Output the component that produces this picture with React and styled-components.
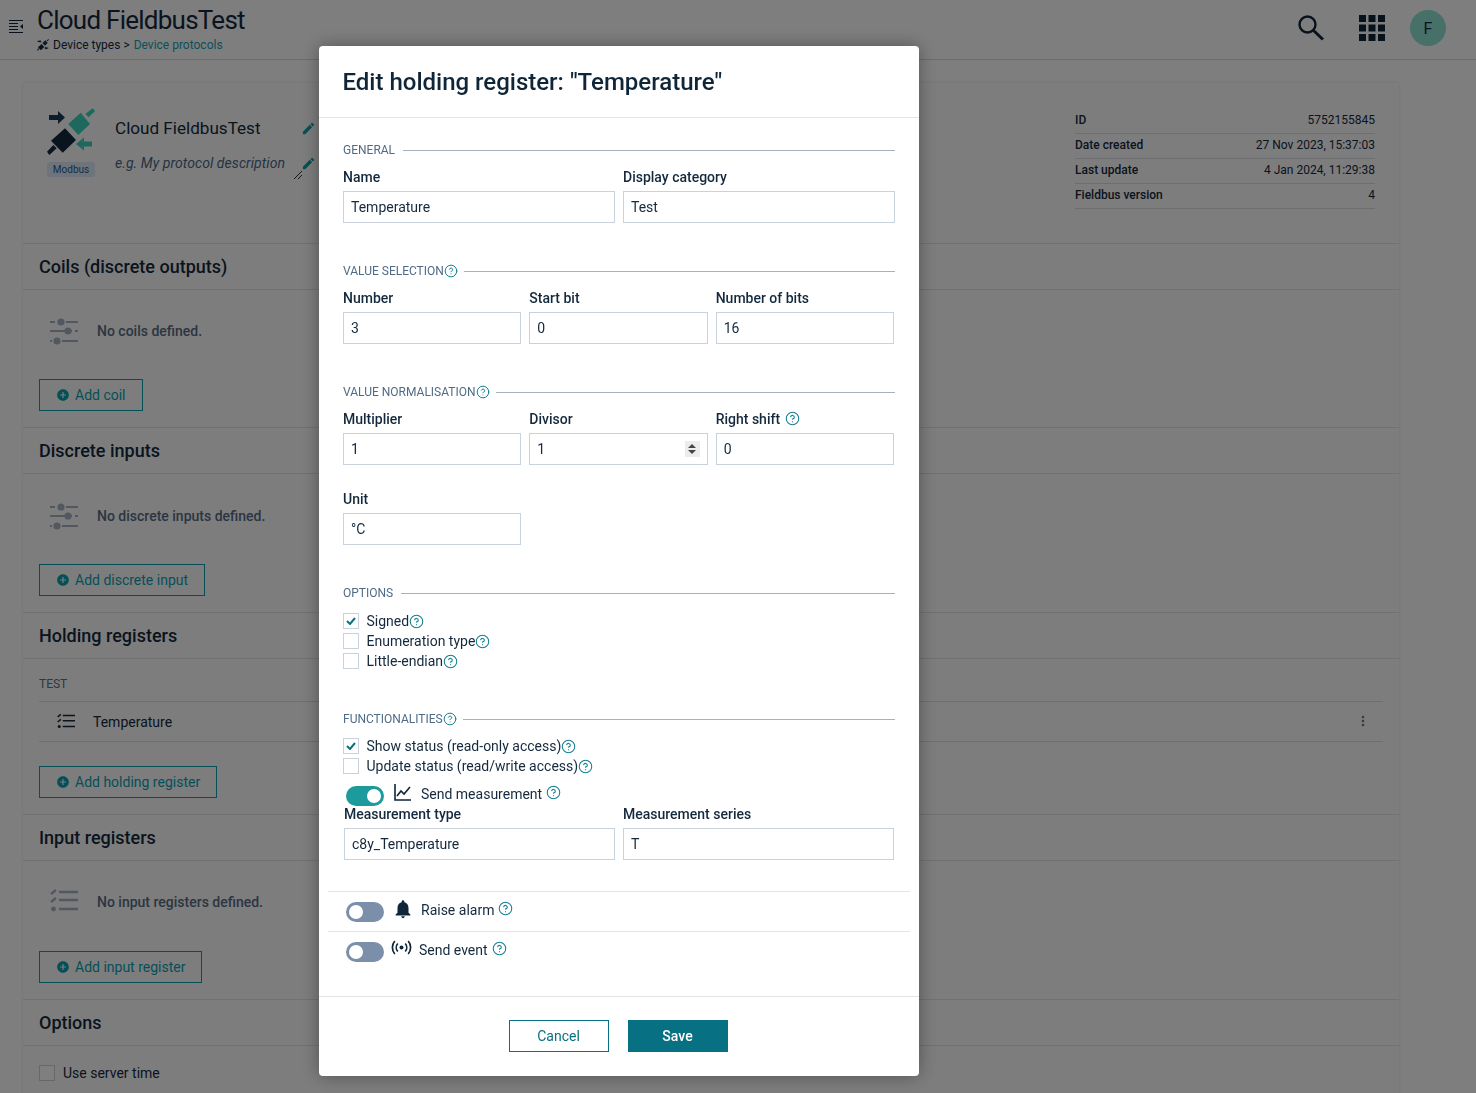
import styled, { createGlobalStyle } from 'styled-components';
import { CircleHelp } from 'lucide-react';
import { MdAddCircle, MdEdit, MdMoreVert, MdNotifications } from 'react-icons/md';

const GlobalStyle = createGlobalStyle`
  html, body {
    margin: 0;
    height: 100%;
    overflow: hidden;
  }
  body {
    font-family: Roboto, "Liberation Sans", sans-serif;
    color: #14293d;
    background: #fdfdfd;
  }
  * { box-sizing: border-box; }
`;

const Page = styled.div`
  height: 1093px;
  overflow: hidden;
`;

const Header = styled.header`
  display: flex;
  align-items: flex-start;
  height: 60px;
  padding: 0 30px 0 9px;
  border-bottom: 1px solid #d4d8dc;
`;

const MenuButton = styled.div`
  width: 28px;
  margin-top: 19px;
  color: #10253a;
`;

const HeaderText = styled.div`
  flex: 1;
`;

const AppTitle = styled.div`
  font-size: 26px;
  letter-spacing: -0.75px;
  line-height: 34px;
  margin-top: 3px;
  margin-bottom: 1px;
  color: #14293d;
`;

const Breadcrumb = styled.div`
  display: flex;
  align-items: center;
  gap: 4px;
  font-size: 12px;
  line-height: 14px;
  color: #14293d;
`;

const BreadcrumbLink = styled.span`
  color: #16a0b0;
`;

const HeaderActions = styled.div`
  display: flex;
  align-items: center;
  gap: 35px;
  height: 56px;
  color: #10253a;
`;

const Avatar = styled.div`
  display: flex;
  align-items: center;
  justify-content: center;
  width: 36px;
  height: 36px;
  margin-left: -10px;
  border-radius: 50%;
  background: #8ee0d0;
  font-size: 16px;
  color: #14293d;
`;

const Content = styled.main`
  padding: 23px 77px 0 23px;
`;

const Card = styled.div`
  background: #fbfbfb;
  box-shadow: 0 0 3px rgba(0, 0, 0, 0.12);
`;

const TopSection = styled.section`
  display: flex;
  justify-content: space-between;
  height: 161px;
  padding: 25px 24px 0 24px;
  border-bottom: 1px solid #dfe2e5;
`;

const Identity = styled.div`
  display: flex;
  gap: 20px;
`;

const LogoColumn = styled.div`
  display: flex;
  flex-direction: column;
  align-items: center;
  width: 48px;
`;

const TypeBadge = styled.span`
  margin-top: 6px;
  padding: 0 6px;
  border-radius: 2px;
  background: #dfe9f4;
  color: #1d5c9a;
  font-size: 10px;
  line-height: 15px;
`;

const NameColumn = styled.div`
  width: 201px;
  position: relative;
`;

const ProtocolName = styled.div`
  display: flex;
  align-items: center;
  justify-content: space-between;
  margin-top: 9px;
  font-size: 17.1px;
  line-height: 22px;
`;

const ProtocolDescription = styled.div`
  display: flex;
  align-items: center;
  justify-content: space-between;
  margin-top: 14px;
  font-size: 14px;
  letter-spacing: 0.07px;
  font-style: italic;
  line-height: 20px;
  color: #4b6684;
`;

const EditIcon = styled(MdEdit)`
  flex: none;
  width: 15px;
  height: 15px;
  margin-left: 10px;
  color: #14a0a0;
`;

const ResizeHandle = styled.svg`
  position: absolute;
  left: 179px;
  top: 63px;
`;

const MetaTable = styled.div`
  width: 300px;
  margin-top: 1px;
`;

const MetaRow = styled.div`
  display: flex;
  justify-content: space-between;
  height: 25px;
  padding-top: 3px;
  border-bottom: 1px solid #d9dde2;
  font-size: 12px;
  line-height: 16px;
`;

const MetaKey = styled.span`
  font-weight: 500;
`;

const Section = styled.section`
  border-bottom: 1px solid #dfe2e5;
  padding-bottom: ${(props) => (props.$flush ? '0' : '16px')};
`;

const SectionTitle = styled.h2`
  display: flex;
  align-items: center;
  height: 46px;
  margin: 0;
  padding: 0 16px;
  border-bottom: 1px solid #dfe2e5;
  font-size: 18px;
  font-weight: 500;
  color: #14293d;
`;

const EmptyState = styled.div`
  display: flex;
  align-items: center;
  gap: 19px;
  height: 82.4px;
  padding-left: 27px;
  font-size: 14px;
  font-weight: 500;
  color: #566c85;
`;

const EmptyIcon = styled.span`
  display: flex;
  color: #a4b1bf;
`;

const AddButton = styled.button`
  display: flex;
  align-items: center;
  gap: 5px;
  height: 32px;
  margin: ${(props) => (props.$flush ? '0' : '7px')} 0 0 16px;
  padding: 0 16px;
  background: transparent;
  border: 1px solid #0b9fb0;
  border-radius: 0;
  color: #0b9fb0;
  font-family: inherit;
  font-size: 14px;
`;

const GroupLabel = styled.div`
  display: flex;
  align-items: flex-end;
  height: 43.4px;
  margin: 0 16px;
  padding-bottom: 9px;
  border-bottom: 1px solid #d9dde2;
  font-size: 12px;
  line-height: 16px;
  color: #56708c;
`;

const RegisterRow = styled.div`
  display: flex;
  align-items: center;
  height: 40px;
  margin: 0 16px 24px;
  padding: 0 12px 0 18px;
  border-bottom: 1px solid #d9dde2;
  font-size: 14px;
`;

const RegisterName = styled.span`
  flex: 1;
  margin-left: 18px;
`;

const RowMenu = styled(MdMoreVert)`
  width: 16px;
  height: 16px;
  margin-top: -2px;
  color: #6d7a88;
`;

const ServerTime = styled.div`
  display: flex;
  align-items: center;
  gap: 8px;
  padding: 19px 16px;
  font-size: 14px;
`;

const Overlay = styled.div`
  position: fixed;
  inset: 0;
  padding: 46px 0 0 319px;
  background: rgba(0, 0, 0, 0.5);
`;

const Modal = styled.div`
  width: 600px;
  height: 1030px;
  display: flex;
  flex-direction: column;
  background: #fff;
  border-radius: 4px;
  box-shadow: 0 0 18px rgba(0, 0, 0, 0.35);
`;

const ModalHeader = styled.div`
  height: 72px;
  padding: 0 24px;
  border-bottom: 1px solid #e1e4e8;
`;

const ModalTitle = styled.h1`
  margin: 0 0 0 -0.5px;
  font-size: 24px;
  font-weight: 500;
  line-height: 72px;
  color: #0f2538;
`;

const ModalBody = styled.div`
  flex: 1;
  padding: 24px 24px 0;
`;

const FormBlock = styled.div`
  margin-bottom: 40px;
`;

const Legend = styled.div`
  display: flex;
  align-items: center;
  height: 16px;
  font-size: 12px;
  color: #4f6b86;
  &::after {
    content: '';
    flex: 1;
    height: 1px;
    margin-left: 8px;
    background: #a3b2c1;
  }
`;

const FieldGrid = styled.div`
  display: grid;
  grid-template-columns: repeat(${(props) => props.$cols}, minmax(0, 1fr));
  gap: 8px;
  margin: 0 ${(props) => (props.$inset ? '1px' : '0')};
  margin-top: ${(props) => props.$top ?? 11}px;
  width: ${(props) => (props.$cols === 3 ? '551px' : 'auto')};
`;

const Field = styled.div`
  display: flex;
  flex-direction: column;
  min-width: 0;
`;

const Label = styled.label`
  display: flex;
  align-items: center;
  gap: 5px;
  height: 16px;
  margin-bottom: 6px;
  font-size: 14px;
  font-weight: 500;
  color: #14293d;
`;

const InputBox = styled.div`
  display: flex;
  align-items: center;
  height: 32px;
  padding: 0 7px;
  border: 1px solid #c8d2dc;
  background: #fff;
`;

const TextInput = styled.input`
  flex: 1;
  width: 100%;
  min-width: 0;
  padding: 0;
  border: 0;
  outline: 0;
  background: transparent;
  font-family: inherit;
  font-size: 14px;
  color: #14293d;
`;

const Spinner = styled.span`
  display: flex;
  flex-direction: column;
  align-items: center;
  justify-content: center;
  gap: 2px;
  flex: none;
  width: 15px;
  height: 16px;
  background: #ececec;
`;

const SpinArrow = styled.span`
  width: 0;
  height: 0;
  border-left: 4px solid transparent;
  border-right: 4px solid transparent;
  ${(props) => (props.$down ? 'border-top' : 'border-bottom')}: 4px solid #444;
`;

const CheckList = styled.div`
  display: flex;
  flex-direction: column;
  margin-top: ${(props) => props.$top}px;
`;

const CheckRow = styled.label`
  display: flex;
  align-items: center;
  height: 20px;
  font-size: 14px;
  color: #14293d;
`;

const CheckBox = styled.span`
  display: flex;
  align-items: center;
  justify-content: center;
  flex: none;
  width: 16px;
  height: 16px;
  margin-right: ${(props) => props.$gap ?? 7.5}px;
  border: 1px solid #c8d2dc;
  background: #fff;
`;

const Help = styled(CircleHelp)`
  flex: none;
  width: ${(props) => props.$size ?? 15}px;
  height: ${(props) => props.$size ?? 15}px;
  margin-left: ${(props) => props.$gap ?? 0}px;
  margin-right: -2px;
  margin-top: ${(props) => props.$top ?? 0}px;
  stroke-width: 1.7;
  color: #137f90;
`;

const SwitchRow = styled.div`
  display: flex;
  align-items: flex-start;
  height: ${(props) => props.$height}px;
  padding-left: ${(props) => props.$pad}px;
  padding-top: ${(props) => props.$padTop}px;
  font-size: 14px;
  color: #14293d;
`;

const DividedRow = styled.div`
  margin: ${(props) => props.$top ?? 0}px -15px 0;
  border-top: 1px solid #e1e4e8;
`;

const Switch = styled.span`
  flex: none;
  display: flex;
  align-items: center;
  justify-content: ${(props) => (props.$on ? 'flex-end' : 'flex-start')};
  width: 38px;
  height: 20px;
  margin-top: 2px;
  padding: 0 3px;
  border-radius: 10px;
  background: ${(props) => (props.$on ? '#1c9a9c' : '#7b8fab')};
`;

const Knob = styled.span`
  width: 14px;
  height: 14px;
  border-radius: 50%;
  background: #fff;
`;

const SwitchIcon = styled.span`
  display: flex;
  flex: none;
  width: ${(props) => props.$width}px;
  margin-left: ${(props) => props.$left}px;
  margin-top: ${(props) => props.$top ?? 0}px;
  color: #0f2538;
`;

const SwitchText = styled.span`
  line-height: 20px;
`;

const ModalFooter = styled.div`
  display: flex;
  justify-content: center;
  gap: 19px;
  height: 80px;
  padding: 23px 2px 0 0;
  border-top: 1px solid #e1e4e8;
`;

const FooterButton = styled.button`
  width: 100px;
  height: 32px;
  padding: 0;
  border: 1px solid #077083;
  background: ${(props) => (props.$primary ? '#077083' : '#fff')};
  color: ${(props) => (props.$primary ? '#fff' : '#077083')};
  font-family: inherit;
  font-size: 14px;
  font-weight: ${(props) => (props.$primary ? 500 : 400)};
`;

const ProtocolLogo = ({ size, mono }) => {
  const second = mono ? '#1c3a56' : '#3cd0bb';
  return (
    <svg width={size} height={size} viewBox="0 0 48 48">
      <polygon points="2,7 11,7 11,3 18,9.5 11,16 11,12 2,12" fill="#1c3a56" />
      <polygon points="21.3,16 33.7,4.7 43,16 31.3,27" fill={second} />
      <polygon points="38.3,6 45.7,0.3 48,3 41.7,9.3" fill={second} />
      <polygon points="4,32.7 18,20.3 29,32 15.7,44.7" fill="#14293d" />
      <polygon points="0,43.7 6.3,37 9.7,40.3 2.3,47" fill="#14293d" />
      <polygon points="45,33.5 37,33.5 37,29.5 29,36 37,42.5 37,38.5 45,38.5" fill={second} />
    </svg>
  );
};

const MenuIcon = () => (
  <svg width="14" height="14" viewBox="0 0 14 14" fill="none" stroke="currentColor">
    <path d="M0 .5h14M0 3.5h9M0 6.5h9M0 9.5h9M0 12.5h14" />
    <path d="M14 4v5l-3-2.5z" fill="currentColor" stroke="none" />
  </svg>
);

const SearchIcon = () => (
  <svg width="26" height="26" viewBox="0 0 26 26" fill="none" stroke="currentColor">
    <circle cx="9.5" cy="9.5" r="8" strokeWidth="2.4" />
    <path d="M15.5 15.5L25 24.5" strokeWidth="3" />
  </svg>
);

const GridIcon = () => (
  <svg width="26" height="26" viewBox="0 0 26 26" fill="currentColor">
    {[0, 9.5, 19].map((y) =>
      [0, 9.5, 19].map((x) => <rect key={`${x}-${y}`} x={x} y={y} width="7" height="7" />)
    )}
  </svg>
);

const SlidersIcon = () => (
  <svg width="28" height="28" viewBox="0 0 28 28" fill="currentColor">
    <path d="M0 4h5v2H0zM16 4h12v2H16zM0 13h22v2H0zM25 13h3v2h-3zM0 23h2v2H0zM12 23h16v2H12z" />
    <circle cx="11" cy="5" r="3.6" />
    <circle cx="18" cy="14" r="3.6" />
    <circle cx="7" cy="24" r="3.6" />
  </svg>
);

const ListIcon = ({ size }) => (
  <svg width={size} height={size} viewBox="0 0 28 28" fill="none" stroke="currentColor" strokeWidth="2.4">
    <path d="M9 4h19M9 12h19M9 21h19" />
    <path d="M1 6l5-4M1 14l5-4" />
    <circle cx="3.5" cy="21" r="2.4" fill="currentColor" stroke="none" />
  </svg>
);

const CheckMark = () => (
  <svg width="10" height="8" viewBox="0 0 10 8" fill="none" stroke="#0b7285" strokeWidth="2">
    <path d="M1 4l3 3 5-6" />
  </svg>
);

const ChartIcon = () => (
  <svg width="17" height="17" viewBox="0 0 17 17" fill="none" stroke="currentColor" strokeWidth="1.6">
    <path d="M1 0v16h16" />
    <path d="M3 12l4-5 3 3 6-7" />
  </svg>
);

const BroadcastIcon = () => (
  <svg width="21" height="16" viewBox="0 0 21 16" fill="none" stroke="currentColor" strokeWidth="1.7">
    <circle cx="10.5" cy="7.5" r="2" fill="currentColor" stroke="none" />
    <path d="M6.8 3.5a6 6 0 0 0 0 8M14.2 3.5a6 6 0 0 1 0 8" />
    <path d="M3.8 1a10 10 0 0 0 0 13M17.2 1a10 10 0 0 1 0 13" />
  </svg>
);

const EmptySection = ({ title, text, action, icon }) => (
  <Section>
    <SectionTitle>{title}</SectionTitle>
    <EmptyState>
      <EmptyIcon>{icon}</EmptyIcon>
      {text}
    </EmptyState>
    <AddButton><MdAddCircle size={14} />{action}</AddButton>
  </Section>
);

const meta = [
  ['ID', '5752155845'],
  ['Date created', '27 Nov 2023, 15:37:03'],
  ['Last update', '4 Jan 2024, 11:29:38'],
  ['Fieldbus version', '4'],
];

const TextField = ({ label, value, help, spinner }) => (
  <Field>
    <Label>{label}{help && <Help $top={-2} />}</Label>
    <InputBox>
      <TextInput defaultValue={value} />
      {spinner && <Spinner><SpinArrow /><SpinArrow $down /></Spinner>}
    </InputBox>
  </Field>
);

const Check = ({ label, checked }) => (
  <CheckRow>
    <CheckBox>{checked && <CheckMark />}</CheckBox>
    {label}<Help />
  </CheckRow>
);

export default function App() {
  return (
    <Page>
      <GlobalStyle />
      <Header>
        <MenuButton><MenuIcon /></MenuButton>
        <HeaderText>
          <AppTitle>Cloud FieldbusTest</AppTitle>
          <Breadcrumb>
            <ProtocolLogo size={12} mono />
            Device types &gt; <BreadcrumbLink>Device protocols</BreadcrumbLink>
          </Breadcrumb>
        </HeaderText>
        <HeaderActions>
          <SearchIcon />
          <GridIcon />
          <Avatar>F</Avatar>
        </HeaderActions>
      </Header>
      <Content>
        <Card>
          <TopSection>
            <Identity>
              <LogoColumn>
                <ProtocolLogo size={48} />
                <TypeBadge>Modbus</TypeBadge>
              </LogoColumn>
              <NameColumn>
                <ProtocolName>Cloud FieldbusTest<EditIcon /></ProtocolName>
                <ProtocolDescription>e.g. My protocol description<EditIcon /></ProtocolDescription>
                <ResizeHandle width="8" height="8" viewBox="0 0 8 8" stroke="#333">
                  <path d="M0 8L8 0M4 8l4-4" />
                </ResizeHandle>
              </NameColumn>
            </Identity>
            <MetaTable>
              {meta.map(([key, value]) => (
                <MetaRow key={key}>
                  <MetaKey>{key}</MetaKey>
                  <span>{value}</span>
                </MetaRow>
              ))}
            </MetaTable>
          </TopSection>
          <EmptySection title="Coils (discrete outputs)" text="No coils defined." action="Add coil" icon={<SlidersIcon />} />
          <EmptySection title="Discrete inputs" text="No discrete inputs defined." action="Add discrete input" icon={<SlidersIcon />} />
          <Section>
            <SectionTitle>Holding registers</SectionTitle>
            <GroupLabel>TEST</GroupLabel>
            <RegisterRow>
              <ListIcon size={18} />
              <RegisterName>Temperature</RegisterName>
              <RowMenu />
            </RegisterRow>
            <AddButton $flush><MdAddCircle size={14} />Add holding register</AddButton>
          </Section>
          <EmptySection title="Input registers" text="No input registers defined." action="Add input register" icon={<ListIcon size={28} />} />
          <Section $flush>
            <SectionTitle>Options</SectionTitle>
            <ServerTime>
              <CheckBox $gap={0} />
              Use server time
            </ServerTime>
          </Section>
        </Card>
      </Content>
      <Overlay>
        <Modal>
          <ModalHeader>
            <ModalTitle>Edit holding register: "Temperature"</ModalTitle>
          </ModalHeader>
          <ModalBody>
            <FormBlock>
              <Legend>GENERAL</Legend>
              <FieldGrid $cols={2}>
                <TextField label="Name" value="Temperature" />
                <TextField label="Display category" value="Test" />
              </FieldGrid>
            </FormBlock>
            <FormBlock>
              <Legend>VALUE SELECTION<Help $size={14} /></Legend>
              <FieldGrid $cols={3}>
                <TextField label="Number" value="3" />
                <TextField label="Start bit" value="0" />
                <TextField label="Number of bits" value="16" />
              </FieldGrid>
            </FormBlock>
            <FormBlock>
              <Legend>VALUE NORMALISATION<Help $size={14} /></Legend>
              <FieldGrid $cols={3}>
                <TextField label="Multiplier" value="1" />
                <TextField label="Divisor" value="1" spinner />
                <TextField label="Right shift" value="0" help />
              </FieldGrid>
              <FieldGrid $cols={3} $top={26}>
                <TextField label="Unit" value="°C" />
              </FieldGrid>
            </FormBlock>
            <FormBlock>
              <Legend>OPTIONS</Legend>
              <CheckList $top={10}>
                <Check label="Signed" checked />
                <Check label="Enumeration type" />
                <Check label="Little-endian" />
              </CheckList>
            </FormBlock>
            <Legend>FUNCTIONALITIES<Help $size={14} /></Legend>
            <CheckList $top={9}>
              <Check label="Show status (read-only access)" checked />
              <Check label="Update status (read/write access)" />
            </CheckList>
            <SwitchRow $height={30} $pad={3} $padTop={8}>
              <Switch $on><Knob /></Switch>
              <SwitchIcon $width={27} $left={10}><ChartIcon /></SwitchIcon>
              <SwitchText>Send measurement</SwitchText>
              <Help $gap={4} $top={1} />
            </SwitchRow>
            <FieldGrid $cols={2} $top={0} $inset>
              <TextField label="Measurement type" value="c8y_Temperature" />
              <TextField label="Measurement series" value="T" />
            </FieldGrid>
            <DividedRow $top={31}>
              <SwitchRow $height={39} $pad={18} $padTop={8}>
                <Switch><Knob /></Switch>
                <SwitchIcon $width={29} $left={8} $top={-2}><MdNotifications size={22} /></SwitchIcon>
                <SwitchText>Raise alarm</SwitchText>
                <Help $gap={4} $top={1} />
              </SwitchRow>
            </DividedRow>
            <DividedRow>
              <SwitchRow $height={39} $pad={18} $padTop={8}>
                <Switch><Knob /></Switch>
                <SwitchIcon $width={28} $left={7}><BroadcastIcon /></SwitchIcon>
                <SwitchText>Send event</SwitchText>
                <Help $gap={4} $top={1} />
              </SwitchRow>
            </DividedRow>
          </ModalBody>
          <ModalFooter>
            <FooterButton>Cancel</FooterButton>
            <FooterButton $primary>Save</FooterButton>
          </ModalFooter>
        </Modal>
      </Overlay>
    </Page>
  );
}
